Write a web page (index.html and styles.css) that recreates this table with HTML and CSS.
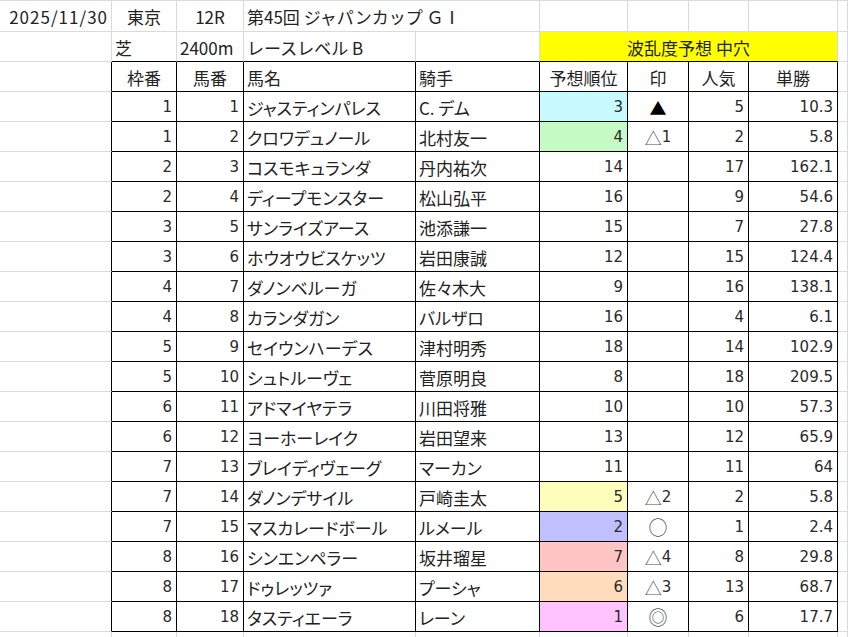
FILE: index.html
```html
<!DOCTYPE html>
<html lang="ja">
<head>
<meta charset="utf-8">
<title>ジャパンカップ 予想</title>
<link rel="stylesheet" href="styles.css">
</head>
<body>
<div class="sheet">
  <!-- row 1 -->
  <div class="c r first date">2025/11/30</div>
  <div class="c m first">東京</div>
  <div class="c m first">12R</div>
  <div class="c l first span2">第45回 ジャパンカップ ＧⅠ</div>
  <div class="c first"></div>
  <div class="c first"></div>
  <div class="c first"></div>
  <div class="c first"></div>
  <div class="c first"></div>
  <!-- row 2 -->
  <div class="c"></div>
  <div class="c l tb">芝</div>
  <div class="c l tb">2400m</div>
  <div class="c l tb">レースレベル B</div>
  <div class="c tb"></div>
  <div class="c m tb span4 yellow">波乱度予想 中穴</div>
  <div class="c"></div>
  <!-- header -->
  <div class="c ta"></div>
  <div class="c m t">枠番</div>
  <div class="c m t">馬番</div>
  <div class="c l t">馬名</div>
  <div class="c l t">騎手</div>
  <div class="c m t">予想順位</div>
  <div class="c m t">印</div>
  <div class="c m t">人気</div>
  <div class="c m t">単勝</div>
  <div class="c"></div>

  <div class="c ta"></div><div class="c n t">1</div><div class="c n t">1</div><div class="c l t p">ジャスティンパレス</div><div class="c l t p">C. デム</div><div class="c n t cyan">3</div><div class="c m t mark black">▲</div><div class="c n t">5</div><div class="c n t">10.3</div><div class="c"></div>
  <div class="c ta"></div><div class="c n t">1</div><div class="c n t">2</div><div class="c l t p">クロワデュノール</div><div class="c l t p">北村友一</div><div class="c n t green">4</div><div class="c m t mark"><span class="sym">△</span><span class="d">1</span></div><div class="c n t">2</div><div class="c n t">5.8</div><div class="c"></div>
  <div class="c ta"></div><div class="c n t">2</div><div class="c n t">3</div><div class="c l t p">コスモキュランダ</div><div class="c l t p">丹内祐次</div><div class="c n t">14</div><div class="c m t"></div><div class="c n t">17</div><div class="c n t">162.1</div><div class="c"></div>
  <div class="c ta"></div><div class="c n t">2</div><div class="c n t">4</div><div class="c l t p">ディープモンスター</div><div class="c l t p">松山弘平</div><div class="c n t">16</div><div class="c m t"></div><div class="c n t">9</div><div class="c n t">54.6</div><div class="c"></div>
  <div class="c ta"></div><div class="c n t">3</div><div class="c n t">5</div><div class="c l t p">サンライズアース</div><div class="c l t p">池添謙一</div><div class="c n t">15</div><div class="c m t"></div><div class="c n t">7</div><div class="c n t">27.8</div><div class="c"></div>
  <div class="c ta"></div><div class="c n t">3</div><div class="c n t">6</div><div class="c l t p">ホウオウビスケッツ</div><div class="c l t p">岩田康誠</div><div class="c n t">12</div><div class="c m t"></div><div class="c n t">15</div><div class="c n t">124.4</div><div class="c"></div>
  <div class="c ta"></div><div class="c n t">4</div><div class="c n t">7</div><div class="c l t p">ダノンベルーガ</div><div class="c l t p">佐々木大</div><div class="c n t">9</div><div class="c m t"></div><div class="c n t">16</div><div class="c n t">138.1</div><div class="c"></div>
  <div class="c ta"></div><div class="c n t">4</div><div class="c n t">8</div><div class="c l t p">カランダガン</div><div class="c l t p">バルザロ</div><div class="c n t">16</div><div class="c m t"></div><div class="c n t">4</div><div class="c n t">6.1</div><div class="c"></div>
  <div class="c ta"></div><div class="c n t">5</div><div class="c n t">9</div><div class="c l t p">セイウンハーデス</div><div class="c l t p">津村明秀</div><div class="c n t">18</div><div class="c m t"></div><div class="c n t">14</div><div class="c n t">102.9</div><div class="c"></div>
  <div class="c ta"></div><div class="c n t">5</div><div class="c n t">10</div><div class="c l t p">シュトルーヴェ</div><div class="c l t p">菅原明良</div><div class="c n t">8</div><div class="c m t"></div><div class="c n t">18</div><div class="c n t">209.5</div><div class="c"></div>
  <div class="c ta"></div><div class="c n t">6</div><div class="c n t">11</div><div class="c l t p">アドマイヤテラ</div><div class="c l t p">川田将雅</div><div class="c n t">10</div><div class="c m t"></div><div class="c n t">10</div><div class="c n t">57.3</div><div class="c"></div>
  <div class="c ta"></div><div class="c n t">6</div><div class="c n t">12</div><div class="c l t p">ヨーホーレイク</div><div class="c l t p">岩田望来</div><div class="c n t">13</div><div class="c m t"></div><div class="c n t">12</div><div class="c n t">65.9</div><div class="c"></div>
  <div class="c ta"></div><div class="c n t">7</div><div class="c n t">13</div><div class="c l t p">ブレイディヴェーグ</div><div class="c l t p">マーカン</div><div class="c n t">11</div><div class="c m t"></div><div class="c n t">11</div><div class="c n t">64</div><div class="c"></div>
  <div class="c ta"></div><div class="c n t">7</div><div class="c n t">14</div><div class="c l t p">ダノンデサイル</div><div class="c l t p">戸崎圭太</div><div class="c n t yellow-l">5</div><div class="c m t mark"><span class="sym">△</span><span class="d">2</span></div><div class="c n t">2</div><div class="c n t">5.8</div><div class="c"></div>
  <div class="c ta"></div><div class="c n t">7</div><div class="c n t">15</div><div class="c l t p">マスカレードボール</div><div class="c l t p">ルメール</div><div class="c n t blue">2</div><div class="c m t mark"><span class="sym big">○</span></div><div class="c n t">1</div><div class="c n t">2.4</div><div class="c"></div>
  <div class="c ta"></div><div class="c n t">8</div><div class="c n t">16</div><div class="c l t p">シンエンペラー</div><div class="c l t p">坂井瑠星</div><div class="c n t red">7</div><div class="c m t mark"><span class="sym">△</span><span class="d">4</span></div><div class="c n t">8</div><div class="c n t">29.8</div><div class="c"></div>
  <div class="c ta"></div><div class="c n t">8</div><div class="c n t">17</div><div class="c l t p">ドゥレッツァ</div><div class="c l t p">プーシャ</div><div class="c n t orange">6</div><div class="c m t mark"><span class="sym">△</span><span class="d">3</span></div><div class="c n t">13</div><div class="c n t">68.7</div><div class="c"></div>
  <div class="c ta"></div><div class="c n t">8</div><div class="c n t">18</div><div class="c l t p">タスティエーラ</div><div class="c l t p">レーン</div><div class="c n t pink">1</div><div class="c m t mark"><span class="sym big">◎</span></div><div class="c n t">6</div><div class="c n t">17.7</div><div class="c"></div>

  <div class="c"></div><div class="c"></div><div class="c"></div><div class="c"></div><div class="c"></div><div class="c"></div><div class="c"></div><div class="c"></div><div class="c"></div><div class="c"></div>
</div>
</body>
</html>
```

FILE: styles.css
```css
html, body {
  margin: 0;
  padding: 0;
  background: #ffffff;
  overflow: hidden;
}

body {
  width: 848px;
  height: 637px;
  font-family: "Noto Sans CJK JP", "Noto Sans", sans-serif;
  font-size: 17px;
  color: #222;
}

.sheet {
  display: grid;
  grid-template-columns: 112px 65px 67px 172px 124px 88px 61px 60px 89px 1fr;
  grid-template-rows: 31px;
  grid-auto-rows: 30px;
  border-top: 1px solid #dadada;
}

.c {
  box-sizing: border-box;
  border-right: 1px solid #dadada;
  border-bottom: 1px solid #dadada;
  display: flex;
  align-items: flex-end;
  padding: 0 3px 5px 3px;
  white-space: nowrap;
  overflow: visible;
  line-height: 1;
}

.first { padding-bottom: 6px; }

.date {
  letter-spacing: 1px;
  padding-right: 3px;
}

.r { justify-content: flex-end; }
.m { justify-content: center; }
.l { justify-content: flex-start; }

.n {
  justify-content: flex-end;
  font-family: "DejaVu Sans", "Noto Sans CJK JP", sans-serif;
  font-size: 15px;
  padding-right: 4px;
  padding-bottom: 6px;
  color: #2a2a2a;
}

.p { font-feature-settings: "palt" 1; }

.span2 { grid-column: span 2; }
.span4 { grid-column: span 4; }

.t {
  border-right-color: #000;
  border-bottom-color: #000;
}

.tb { border-bottom-color: #000; }
.ta { border-right-color: #000; }

.yellow { background: #ffff00; }

.cyan { background: #c8fbff; }
.green { background: #c6fbc6; }
.yellow-l { background: #ffffbb; }
.blue { background: #c0c0ff; }
.red { background: #ffc4c4; }
.orange { background: #ffdcbc; }
.pink { background: #ffc4ff; }

.mark { color: #333; }
.mark .sym { color: #555; }
.mark .d {
  font-family: "DejaVu Sans", sans-serif;
  font-size: 15px;
  color: #2a2a2a;
  margin-bottom: 1px;
}
.mark .big { font-size: 19px; }
.black { color: #000; }
```
